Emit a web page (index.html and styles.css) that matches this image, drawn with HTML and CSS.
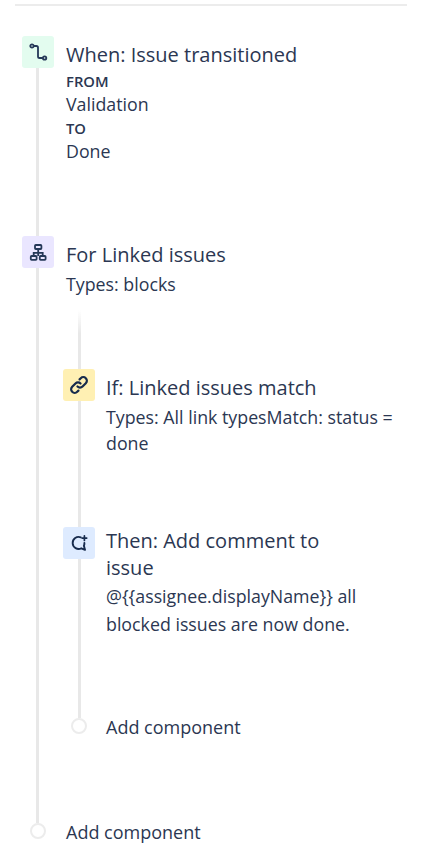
FILE: index.html
```html
<!DOCTYPE html>
<html lang="en">
<head>
<meta charset="utf-8">
<title>Automation rule</title>
<link rel="stylesheet" href="styles.css">
</head>
<body>
<hr class="rule">
<main class="flow">
  <section class="step step-when">
    <div class="rail">
      <span class="icon icon-green">
        <svg viewBox="0 0 20 20" width="20" height="20" fill="none" stroke="#253858" stroke-width="1.8"><circle cx="4" cy="4" r="1.7"/><circle cx="16.6" cy="16" r="1.7"/><path d="M5.7 4H8.4Q10 4 10 5.6V14.4Q10 16 11.6 16H14.9"/></svg>
      </span>
      <span class="line line-outer"></span>
    </div>
    <div class="body">
      <h2 class="title">When: Issue transitioned</h2>
      <p class="label label-first">FROM</p>
      <p class="text">Validation</p>
      <p class="label">TO</p>
      <p class="text">Done</p>
    </div>
  </section>

  <section class="step step-for">
    <div class="rail">
      <span class="icon icon-purple">
        <svg viewBox="0 0 20 20" width="20" height="20" fill="none" stroke="#253858" stroke-width="1.8"><rect x="7" y="3" width="6.4" height="4" rx=".8"/><rect x="2.8" y="14" width="5.8" height="3.8" rx=".8"/><rect x="11.8" y="14" width="5.8" height="3.8" rx=".8"/><path d="M10.2 7V14M5.7 14V10.8H14.7V14"/></svg>
      </span>
      <span class="line line-outer"></span>
    </div>
    <div class="body">
      <h2 class="title">For Linked issues</h2>
      <p class="text text-types">Types: blocks</p>
      <div class="nested">
        <section class="step step-if">
          <div class="rail">
            <span class="line line-fade"></span>
            <span class="icon icon-yellow">
              <svg viewBox="0 0 20 20" width="22" height="22" fill="none" stroke="#172b4d" stroke-width="2" stroke-linecap="round"><path d="M8.6 11.4a3.2 3.2 0 0 0 4.6 0l3-3a3.2 3.2 0 0 0-4.6-4.6l-1.1 1.1"/><path d="M11.4 8.6a3.2 3.2 0 0 0-4.6 0l-3 3a3.2 3.2 0 0 0 4.6 4.6l1.1-1.1"/></svg>
            </span>
            <span class="line"></span>
          </div>
          <div class="body body-if">
            <h2 class="title">If: Linked issues match</h2>
            <p class="text text-match">Types: All link typesMatch: status = done</p>
          </div>
        </section>
        <section class="step step-then">
          <div class="rail">
            <span class="icon icon-blue">
              <svg viewBox="0 0 20 20" width="20" height="20" fill="none" stroke="#172b4d" stroke-width="1.9" stroke-linecap="round" stroke-linejoin="round"><path d="M11.8 4.3A6 6 0 1 0 12.3 15.3L16 16.8L14.9 12.8A6 6 0 0 0 15.4 10"/><path d="M15.4 2.8V7.4M13.1 5.1H17.7" stroke-width="1.7"/></svg>
            </span>
            <span class="line"></span>
          </div>
          <div class="body body-narrow">
            <h2 class="title title-flush">Then: Add comment to issue</h2>
            <p class="text text-loose">@{{assignee.displayName}} all blocked issues are now done.</p>
          </div>
        </section>
        <section class="step step-add">
          <div class="rail"><span class="dot"></span></div>
          <div class="body"><p class="add">Add component</p></div>
        </section>
      </div>
    </div>
  </section>

  <section class="step step-add">
    <div class="rail"><span class="dot"></span></div>
    <div class="body"><p class="add">Add component</p></div>
  </section>
</main>
</body>
</html>
```
FILE: styles.css
```css
* { box-sizing: border-box; }
html, body { margin: 0; padding: 0; background: #fff; }
body {
  width: 421px;
  height: 867px;
  overflow: hidden;
  font-family: "Open Sans", "Noto Sans", sans-serif;
  color: #2b3752;
}
.rule {
  width: 392px;
  height: 2px;
  margin: 4px 0 0 15px;
  border: 0;
  background: #ececec;
}
.flow { padding: 30px 0 0 22px; }
.step { display: flex; gap: 12px; }
.rail {
  flex: none;
  width: 32px;
  display: flex;
  flex-direction: column;
  align-items: center;
}
.body { flex: 1; min-width: 0; }
.icon {
  flex: none;
  width: 32px;
  height: 32px;
  border-radius: 3px;
  display: flex;
  align-items: center;
  justify-content: center;
}
.icon-green { background: #e3fcef; }
.icon-purple { background: #eae6ff; }
.icon-yellow { background: #fff0b3; }
.icon-blue { background: #deebff; }
.line { flex: 1; width: 3px; background: #e8e8e8; }
.line-outer { margin-right: 1px; }
.line-fade {
  flex: none;
  height: 59px;
  background: linear-gradient(#ffffff, #e8e8e8 40%);
}
.title {
  margin: 0;
  font-size: 20px;
  font-weight: 400;
  line-height: 27px;
  padding-top: 5px;
}
.title-flush { padding-top: 0; }
.label {
  margin: 0;
  font-size: 14.8px;
  font-weight: 600;
  line-height: 23.5px;
}
.label-first { margin-top: 1.5px; }
.text {
  margin: 0;
  font-size: 17.8px;
  line-height: 25px;
}
.step-when { height: 200px; }
.step-when .text { line-height: 23.5px; }
.step-for { height: 587px; }
.text-types { margin-top: 4px; }
.nested { margin: 13px 0 0 -3px; width: 338px; }
.nested .step { gap: 11px; }
.step-if { height: 217px; }
.body-if { padding-top: 59px; }
.text-match { margin-top: 3px; line-height: 26px; }
.step-then { height: 191px; }
.body-narrow { padding-right: 44px; }
.text-loose { margin-top: 1px; line-height: 28px; }
.step-add { height: 24px; }
.dot {
  width: 16px;
  height: 16px;
  border-radius: 50%;
  border: 2px solid #ececec;
  background: #fff;
}
.add { margin: 0; font-size: 18px; line-height: 24px; margin-top: -3px; }
```
